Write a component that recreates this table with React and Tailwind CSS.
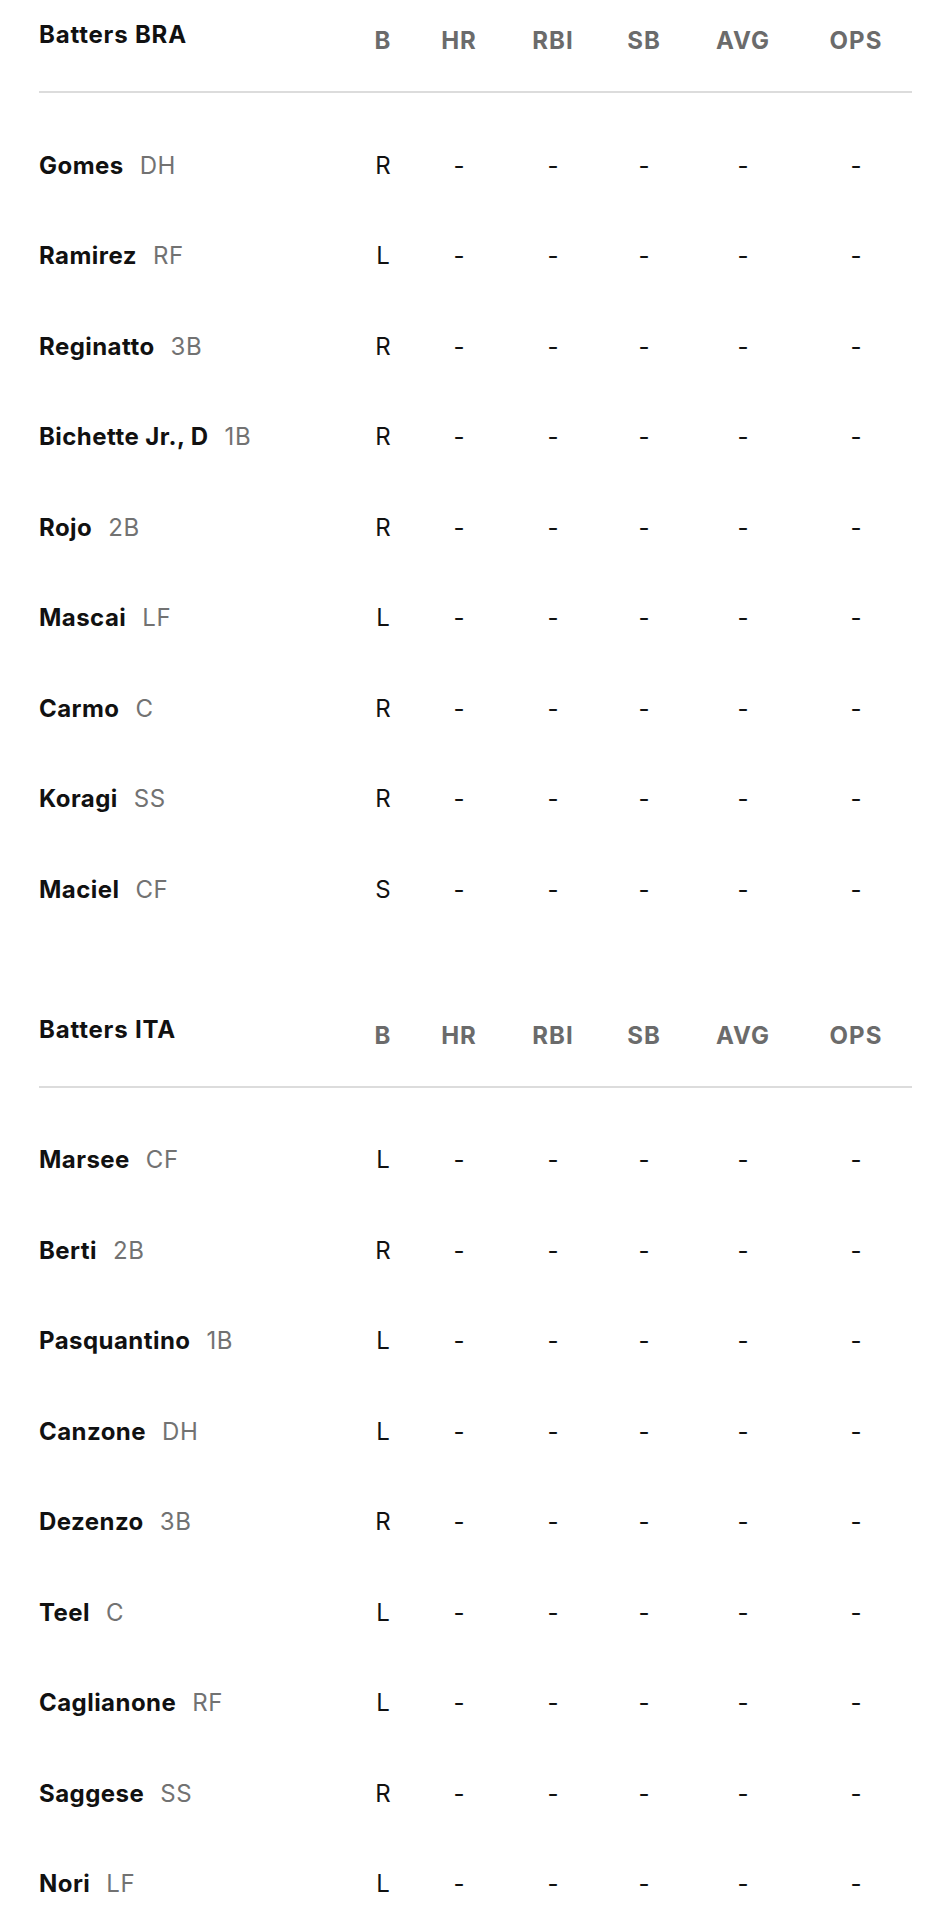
import React from 'react';

const COLUMNS = ['B', 'HR', 'RBI', 'SB', 'AVG', 'OPS'];

const TEAMS = [
  {
    name: 'Batters BRA',
    players: [
      ['Gomes', 'DH', 'R'],
      ['Ramirez', 'RF', 'L'],
      ['Reginatto', '3B', 'R'],
      ['Bichette Jr., D', '1B', 'R'],
      ['Rojo', '2B', 'R'],
      ['Mascai', 'LF', 'L'],
      ['Carmo', 'C', 'R'],
      ['Koragi', 'SS', 'R'],
      ['Maciel', 'CF', 'S'],
    ],
  },
  {
    name: 'Batters ITA',
    players: [
      ['Marsee', 'CF', 'L'],
      ['Berti', '2B', 'R'],
      ['Pasquantino', '1B', 'L'],
      ['Canzone', 'DH', 'L'],
      ['Dezenzo', '3B', 'R'],
      ['Teel', 'C', 'L'],
      ['Caglianone', 'RF', 'L'],
      ['Saggese', 'SS', 'R'],
      ['Nori', 'LF', 'L'],
    ],
  },
];

// name | B | HR | RBI | SB | AVG | OPS
const grid = 'grid grid-cols-[313px_62px_90px_98px_84px_114px_112px]';

function BattersTable({ team, first }) {
  return (
    <section className={first ? '' : 'mt-[59px]'}>
      <div className={`${grid} h-[93px] items-start pt-[21px] border-b-2 border-[#dcdcdc]`}>
        <h3 className="text-[24px] leading-[1.2] font-bold tracking-[0.8px] text-[#111]">{team.name}</h3>
        {COLUMNS.map((c) => (
          <span key={c} className="mt-[6px] text-center text-[24px] leading-[1.2] font-bold tracking-[1px] text-[#6b6b6b]">
            {c}
          </span>
        ))}
      </div>

      <div className="mt-[28px]">
        {team.players.map(([name, pos, bats]) => (
          <div key={name} className={`${grid} h-[90.5px] items-center text-[24px] leading-[1.2]`}>
            <div className="flex items-baseline">
              <span className="font-bold tracking-[0.45px] text-[#111]">{name}</span>
              <span className="ml-[16px] tracking-[0.6px] text-[#727272]">{pos}</span>
            </div>
            <span className="text-center text-[#111]">{bats}</span>
            {COLUMNS.slice(1).map((c) => (
              <span key={c} className="text-center text-[#111]">-</span>
            ))}
          </div>
        ))}
      </div>
    </section>
  );
}

export default function App() {
  return (
    <div className="min-h-screen bg-white pl-[39px] pr-[17px] font-['Inter',sans-serif]">
      {TEAMS.map((team, i) => (
        <BattersTable key={team.name} team={team} first={i === 0} />
      ))}
    </div>
  );
}
